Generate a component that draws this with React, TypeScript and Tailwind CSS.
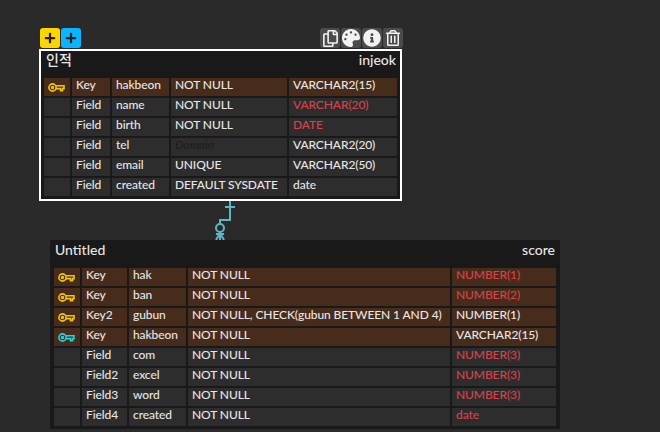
import { FaPalette, FaInfoCircle, FaPlus, FaRegCopy, FaRegTrashAlt } from 'react-icons/fa';

interface Row {
  key?: 'yellow' | 'cyan';
  type: string;
  name: string;
  option: string;
  dataType: string;
  red?: boolean;
}

const injeokRows: Row[] = [
  { key: 'yellow', type: 'Key', name: 'hakbeon', option: 'NOT NULL', dataType: 'VARCHAR2(15)' },
  { type: 'Field', name: 'name', option: 'NOT NULL', dataType: 'VARCHAR(20)', red: true },
  { type: 'Field', name: 'birth', option: 'NOT NULL', dataType: 'DATE', red: true },
  { type: 'Field', name: 'tel', option: '', dataType: 'VARCHAR2(20)' },
  { type: 'Field', name: 'email', option: 'UNIQUE', dataType: 'VARCHAR2(50)' },
  { type: 'Field', name: 'created', option: 'DEFAULT SYSDATE', dataType: 'date' },
];

const scoreRows: Row[] = [
  { key: 'yellow', type: 'Key', name: 'hak', option: 'NOT NULL', dataType: 'NUMBER(1)', red: true },
  { key: 'yellow', type: 'Key', name: 'ban', option: 'NOT NULL', dataType: 'NUMBER(2)', red: true },
  { key: 'yellow', type: 'Key2', name: 'gubun', option: 'NOT NULL, CHECK(gubun BETWEEN 1 AND 4)', dataType: 'NUMBER(1)' },
  { key: 'cyan', type: 'Key', name: 'hakbeon', option: 'NOT NULL', dataType: 'VARCHAR2(15)' },
  { type: 'Field', name: 'com', option: 'NOT NULL', dataType: 'NUMBER(3)', red: true },
  { type: 'Field2', name: 'excel', option: 'NOT NULL', dataType: 'NUMBER(3)', red: true },
  { type: 'Field3', name: 'word', option: 'NOT NULL', dataType: 'NUMBER(3)', red: true },
  { type: 'Field4', name: 'created', option: 'NOT NULL', dataType: 'date', red: true },
];

function KeyIcon({ color }: { color: string }) {
  return (
    <svg width="17" height="11" viewBox="0 0 17 11" fill="none" stroke={color} strokeWidth="1.6">
      <circle cx="4.5" cy="5.5" r="3.6" />
      <circle cx="4.5" cy="5.5" r="1" />
      <path d="M8 3.8H16V6.6H14.5V8.6H12.5V6.6H8" />
    </svg>
  );
}

function TableRows({ rows, grid }: { rows: Row[]; grid: string }) {
  return (
    <div className="flex flex-col gap-[2px]">
      {rows.map((row) => {
        const cell = `h-[18px] pl-[4px] leading-[14px] whitespace-nowrap ${row.key ? 'bg-[#472c1b]' : 'bg-[#2d2d2d]'}`;
        return (
          <div key={row.name} className={`grid gap-[2px] ${grid}`}>
            <div className={`${row.key ? 'bg-[#472c1b]' : 'bg-[#2d2d2d]'} h-[18px] flex items-center pl-[4px]`}>
              {row.key && <KeyIcon color={row.key === 'cyan' ? '#22d3e0' : '#f2c40f'} />}
            </div>
            <div className={cell}>{row.type}</div>
            <div className={cell}>{row.name}</div>
            <div className={cell}>
              {row.option || <span className="italic text-[#1e1e1e]">Domain</span>}
            </div>
            <div className={`${cell} ${row.red ? 'text-[#d9424a]' : ''}`}>{row.dataType}</div>
          </div>
        );
      })}
    </div>
  );
}

function ToolButton({ children }: { children: React.ReactNode }) {
  return (
    <div className="w-[20px] h-[20px] rounded-[3px] bg-[#4b4b4b] flex items-center justify-center text-[#f2f2f2]">
      {children}
    </div>
  );
}

export default function App() {
  return (
    <div
      className="relative w-[660px] h-[432px] overflow-hidden bg-[#2a2a2a] text-[#e6e6e6] text-[12px] font-medium tracking-[-0.1px]"
      style={{ fontFamily: 'Lato, "Noto Sans CJK KR", sans-serif' }}
    >
      {/* relationship line */}
      <svg className="absolute left-[210px] top-[200px]" width="30" height="42" viewBox="0 0 30 42" fill="none" stroke="#5cb6c6" strokeWidth="2">
        <path d="M20 0V20H10V24" />
        <path d="M15 7H25" />
        <circle cx="10" cy="28" r="4" />
        <path d="M10 32V40M10 33L6 40M10 33L14 40M6 34H14" />
      </svg>

      {/* injeok table */}
      <div className="absolute left-[39px] top-[28px] w-[363px]">
        <div className="flex justify-between h-[21px] pl-[1px]">
          <div className="flex gap-[1px]">
            <div className="w-[20px] h-[20px] rounded-[3px] bg-[#ffd500] flex items-center justify-center text-[#222222]">
              <FaPlus size={12} />
            </div>
            <div className="w-[20px] h-[20px] rounded-[3px] bg-[#0ab4ff] flex items-center justify-center text-[#222222]">
              <FaPlus size={12} />
            </div>
          </div>
          <div className="flex gap-[1px] mr-[-1px]">
            <ToolButton><FaRegCopy size={17} /></ToolButton>
            <ToolButton><FaPalette size={18} /></ToolButton>
            <ToolButton><FaInfoCircle size={18} /></ToolButton>
            <ToolButton><FaRegTrashAlt size={16} /></ToolButton>
          </div>
        </div>
        <div className="h-[152px] border-2 border-white bg-[#191919] pl-[3px] pr-[2px]">
          <div className="flex justify-between h-[27px] text-[14px] font-medium tracking-normal leading-[17px] pr-[2px] pl-[2px]">
            <span>인적</span>
            <span>injeok</span>
          </div>
          <TableRows rows={injeokRows} grid="grid-cols-[26px_38px_57px_116px_108px]" />
        </div>
      </div>

      {/* score table */}
      <div className="absolute left-[50px] top-[240px] w-[510px] h-[189px] bg-[#191919] pl-[4px] pr-[4px]">
        <div className="flex justify-between h-[28px] text-[14px] font-medium tracking-normal leading-[20px] pl-[1px] pr-[1px]">
          <span>Untitled</span>
          <span>score</span>
        </div>
        <TableRows rows={scoreRows} grid="grid-cols-[26px_45px_57px_262px_104px]" />
      </div>
    </div>
  );
}
